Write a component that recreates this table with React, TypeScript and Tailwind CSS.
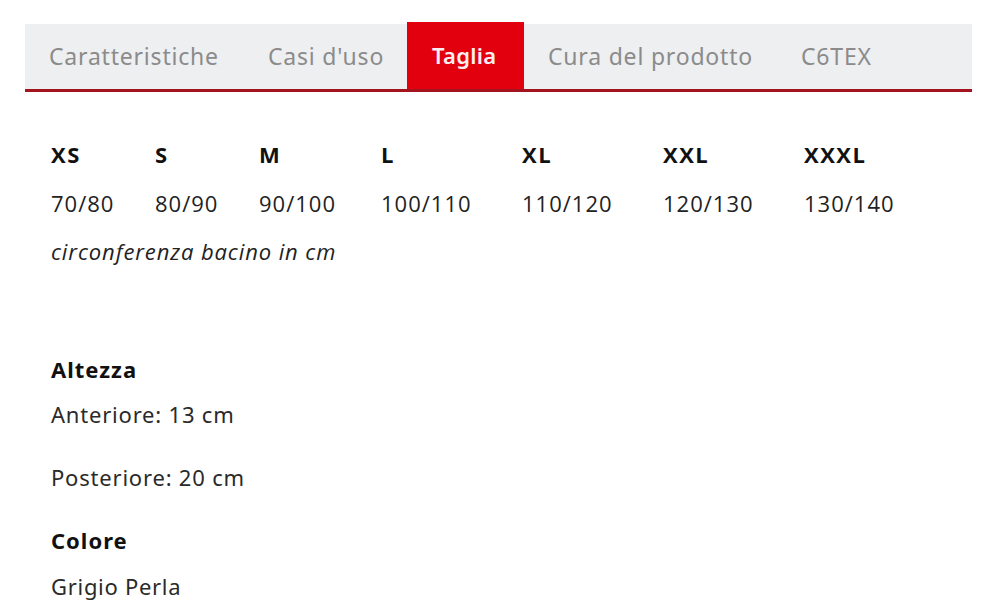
import React from "react";

const tabs = [
  { label: "Caratteristiche", w: "w-[219px]", active: false },
  { label: "Casi d'uso", w: "w-[163px]", active: false },
  { label: "Taglia", w: "w-[117px]", active: true },
  { label: "Cura del prodotto", w: "w-[253px]", active: false },
  { label: "C6TEX", w: "w-[123px]", active: false },
];

const sizes = [
  { s: "XS", v: "70/80" },
  { s: "S", v: "80/90" },
  { s: "M", v: "90/100" },
  { s: "L", v: "100/110" },
  { s: "XL", v: "110/120" },
  { s: "XXL", v: "120/130" },
  { s: "XXXL", v: "130/140" },
];

export default function App() {
  return (
    <div className="w-[1000px] h-[615px] bg-white overflow-hidden pl-[25px] pt-[22px] font-['Open_Sans',sans-serif]">
      <div className="flex items-end w-[947px] border-b-[3px] border-[#a3141e]">
        {tabs.map((t) =>
          t.active ? (
            <div
              key={t.label}
              className={`${t.w} h-[67px] bg-[#e2000f] flex items-center pl-[25px] pb-[1px] text-[22px] tracking-[0.3px] font-semibold text-[#fbeef0] font-['Noto_Sans',sans-serif]`}
            >
              {t.label}
            </div>
          ) : (
            <div
              key={t.label}
              className={`${t.w} h-[65px] bg-[#eeeff1] flex items-center pl-[24px] text-[23px] tracking-[0.8px] text-[#8b8b8b] font-['Noto_Sans',sans-serif]`}
            >
              {t.label}
            </div>
          )
        )}
        <div className="flex-1 h-[65px] bg-[#eeeff1]" />
      </div>

      <div className="pl-[26px] mt-[47px] text-[#222]">
        <div className="grid grid-cols-[104px_104px_122px_141px_141px_141px_auto] text-[22px] leading-[30px]">
          {sizes.map((x) => (
            <div key={x.s} className="font-bold text-[#111] tracking-[1.5px]">
              {x.s}
            </div>
          ))}
          {sizes.map((x) => (
            <div key={x.v} className="mt-[19px] tracking-[1px]">
              {x.v}
            </div>
          ))}
        </div>
        <div className="mt-[18px] italic text-[22px] tracking-[0.9px] leading-[30px]">circonferenza bacino in cm</div>

        <div className="font-['Noto_Sans',sans-serif] text-[22px] leading-[30px] text-[#2a2a2a] tracking-[0.8px]">
          <div className="mt-[88px] font-bold text-[#111] tracking-[1px]">Altezza</div>
          <div className="mt-[15px]">Anteriore: 13 cm</div>
          <div className="mt-[33px]">Posteriore: 20 cm</div>
          <div className="mt-[33px] font-bold text-[#111] tracking-[1px]">Colore</div>
          <div className="mt-[16px] tracking-[0.7px]">Grigio Perla</div>
        </div>
      </div>
    </div>
  );
}
